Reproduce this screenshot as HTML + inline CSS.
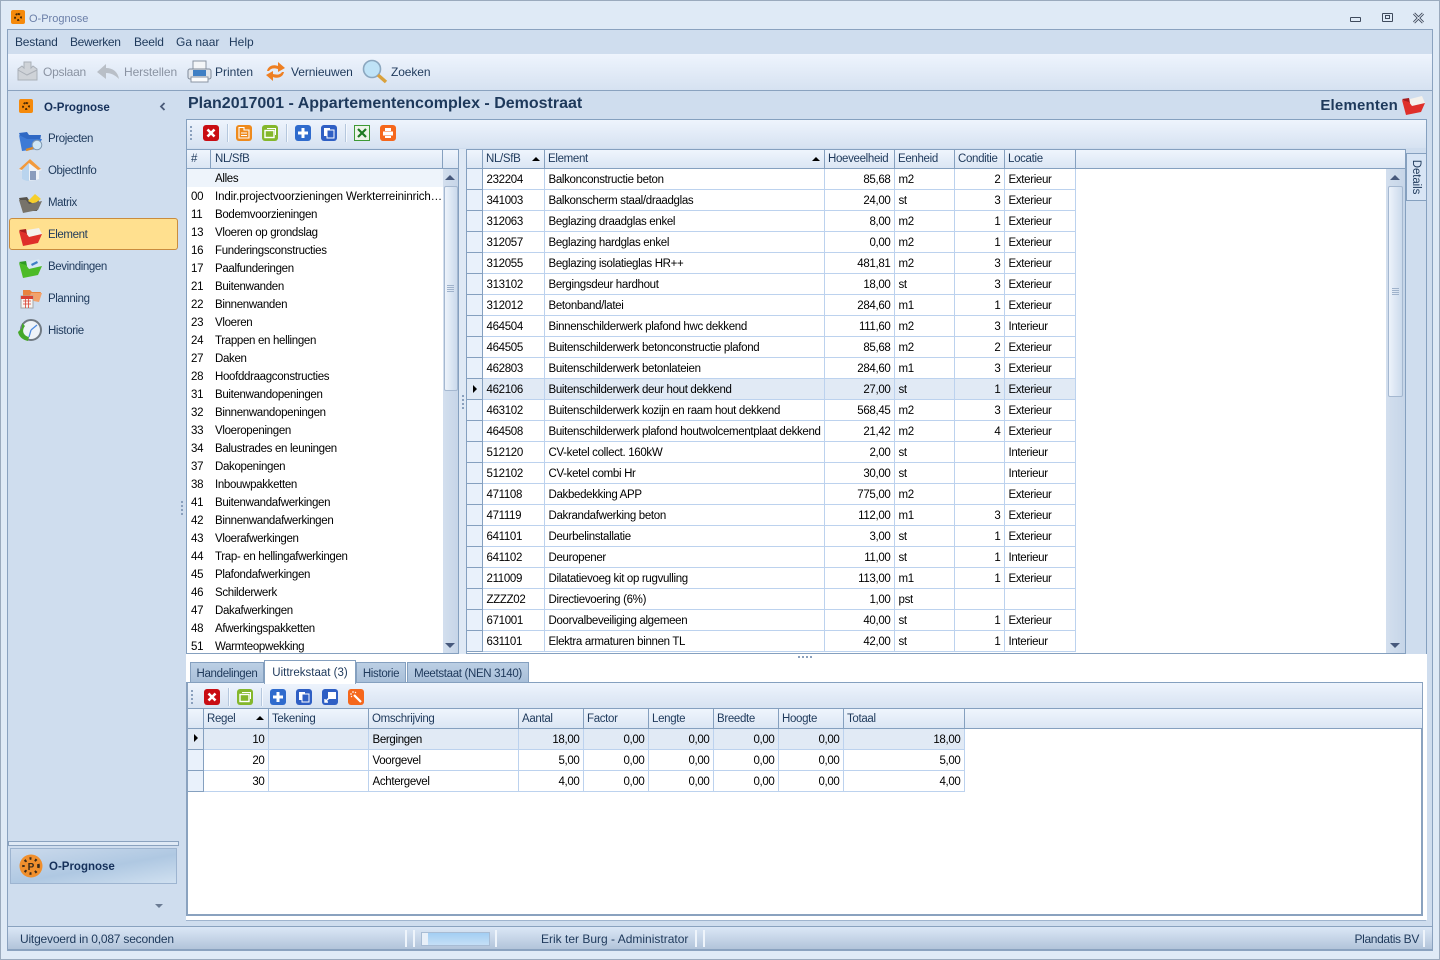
<!DOCTYPE html>
<html><head><meta charset="utf-8"><title>O-Prognose</title>
<style>
html,body{margin:0;padding:0;width:1440px;height:960px;overflow:hidden;background:#dfeaf6}
*{box-sizing:border-box}
body{font-family:"Liberation Sans",sans-serif;font-size:11.5px;letter-spacing:-.33px;color:#000;position:relative}
.a{position:absolute}
.t{position:absolute;white-space:nowrap;line-height:14px}
.nav{color:#1e395b;font-size:11.5px;letter-spacing:-.4px;margin-top:1px}
.m{color:#1e395b;font-size:12px;letter-spacing:-.2px}
.bt{color:#1e395b;font-size:12px;letter-spacing:-.1px}
.blue{color:#1e395b}
table{border-collapse:collapse;table-layout:fixed;position:absolute;font-size:11.5px}
td{padding:3px 3px 0 4px;white-space:nowrap;overflow:hidden;border-right:1px solid #bcd2ee;border-bottom:1px solid #bcd2ee;vertical-align:top}
.g tr{height:21px}
.g td{height:21px;line-height:16px}
.g tr:first-child td{padding-top:4px}
.g td.i,.g tr:first-child td.i{background:#e9f1fb;border-right:1px solid #85a0bf;border-bottom:1px solid #85a0bf;padding:0;vertical-align:middle}
.g td.n{text-align:right;padding-right:3px}
.g tr.s td{background:#e1eaf5}
.g tr.s td.i{background:#e1eaf5}
.tri{display:block;width:0;height:0;border-left:4px solid #000;border-top:4px solid transparent;border-bottom:4px solid transparent;margin-left:6px}
.h{position:absolute;height:20px;background:linear-gradient(#eff5fd,#dbe6f4);border-bottom:1px solid #85a0bf;border-top:1px solid #85a0bf;}
.hc{position:absolute;top:0;height:18px;border-right:1px solid #85a0bf;line-height:19px;padding-left:3px;color:#1e395b;white-space:nowrap}
.lh .hc{height:19px;line-height:21px}
.sort{position:absolute;top:7px;width:0;height:0;border-left:4px solid transparent;border-right:4px solid transparent;border-bottom:4px solid #000}
.lr{position:absolute;left:0;height:18px;line-height:20px;white-space:nowrap}
.lr b{font-weight:normal;position:absolute;left:4px}
.lr span{position:absolute;left:28px}
.tb{position:absolute;background:linear-gradient(#eef4fd,#d6e2f1)}
.ic{position:absolute;width:16px;height:16px;border-radius:3px}
.sep{position:absolute;width:1px;height:18px;background:#b5c7dd;border-right:1px solid #f5f9fe;width:2px}
.grip{position:absolute;width:2px;height:14px;background:repeating-linear-gradient(#8aa0bd 0 2px,transparent 2px 4px)}
.sb{position:absolute;background:linear-gradient(90deg,#d3dfee,#c6d5e8)}
.thumb{position:absolute;background:linear-gradient(90deg,#edf3fb,#cbdaec);border:1px solid #a5b8d0;border-radius:2px}
.up{position:absolute;width:0;height:0;border-left:5px solid transparent;border-right:5px solid transparent;border-bottom:5px solid #47597c}
.dn{position:absolute;width:0;height:0;border-left:5px solid transparent;border-right:5px solid transparent;border-top:5px solid #47597c}
.tab{position:absolute;top:662px;height:20px;background:linear-gradient(#bccfe4,#a8bfd9);border:1px solid #85a0bf;border-bottom:none;color:#1e395b;line-height:22px;text-align:center;white-space:nowrap}
svg{position:absolute;overflow:visible}
</style></head><body>

<!-- window -->
<div class="a" style="left:0;top:0;width:1440px;height:960px;border:1px solid #9aaabd;background:#dfeaf6"></div>
<div class="a" style="left:11px;top:10px;width:14px;height:14px;border-radius:2px;background:#f58a0c"></div>
<div class="a" style="left:14px;top:13px;width:8px;height:8px;border-radius:50%;border:2px dotted #4a2a05"></div>
<div class="t" style="left:29px;top:12px;color:#6b7fa8;font-size:11px;letter-spacing:0">O-Prognose</div>
<div class="a" style="left:1350px;top:17px;width:11px;height:5px;border:1px solid #3f4a5c;border-radius:1px"></div>
<div class="a" style="left:1382px;top:13px;width:11px;height:9px;border:1px solid #3f4a5c;border-radius:1px"></div>
<div class="a" style="left:1385px;top:15px;width:5px;height:4px;border:1px solid #3f4a5c"></div>
<svg style="left:1413px;top:13px" width="11" height="10"><path d="M1 0.5L10 9.5M10 0.5L1 9.5" stroke="#3f4a5c" stroke-width="2.8"/><path d="M1 0.5L10 9.5M10 0.5L1 9.5" stroke="#e6eef8" stroke-width="1"/></svg>

<!-- frame -->
<div class="a" style="left:7px;top:29px;width:1426px;height:922px;border:1px solid #8aa2bf;background:#cfddee"></div>
<div class="t m" style="left:15px;top:35px">Bestand</div>
<div class="t m" style="left:70px;top:35px;letter-spacing:-.35px">Bewerken</div>
<div class="t m" style="left:134px;top:35px">Beeld</div>
<div class="t m" style="left:176px;top:35px;letter-spacing:0">Ga naar</div>
<div class="t m" style="left:229px;top:35px;letter-spacing:0">Help</div>

<!-- main toolbar -->
<div class="tb" style="left:8px;top:54px;width:1424px;height:37px;border-bottom:1px solid #8aa2bf"></div>
<svg style="left:16px;top:60px" width="22" height="22"><path d="M2 9L6 6L8 8V2H15V8L17 6L21 9V20H2Z" fill="#cfd3d8" stroke="#aab0b8"/><path d="M2 10L11 15L21 10" fill="none" stroke="#aab0b8"/></svg>
<div class="t bt" style="left:43px;top:65px;color:#8a93a2;letter-spacing:-.25px">Opslaan</div>
<svg style="left:97px;top:62px" width="23" height="18"><path d="M0 10L9 2V6C16 6 21 10 22 17C18 13 14 11 9 11V17Z" fill="#b9bfc7"/></svg>
<div class="t bt" style="left:124px;top:65px;color:#8a93a2">Herstellen</div>
<svg style="left:187px;top:60px" width="25" height="24"><rect x="6" y="1" width="13" height="9" fill="#f4f6f8" stroke="#8b95a3"/><rect x="1" y="9" width="23" height="10" rx="2" fill="#dfe4ea" stroke="#7f8a99"/><rect x="6" y="10" width="13" height="6" fill="#3f7fc4"/><rect x="4" y="17" width="17" height="5" fill="#fbfcfd" stroke="#8b95a3"/></svg>
<div class="t bt" style="left:215px;top:65px;letter-spacing:0">Printen</div>
<svg style="left:265px;top:60px" width="21" height="23"><path d="M2 11C3 6 8 4 13 6V2L20 8L13 12V9C9 8 6 8 4 11Z" fill="#ee7f22"/><path d="M19 12C18 17 13 19 8 17V21L1 15L8 11V14C12 15 15 15 17 12Z" fill="#ee7f22"/></svg>
<div class="t bt" style="left:291px;top:65px">Vernieuwen</div>
<svg style="left:362px;top:59px" width="26" height="25"><circle cx="10" cy="10" r="8.5" fill="#bfe3f7" stroke="#8ba7bf" stroke-width="1.6"/><path d="M16 16L24 23" stroke="#d9a13c" stroke-width="3.4"/></svg>
<div class="t bt" style="left:391px;top:65px">Zoeken</div>

<!-- left nav -->
<div class="a" style="left:178px;top:91px;width:8px;height:830px;background:#cfddee"></div>
<div class="a" style="left:19px;top:99px;width:14px;height:14px;border-radius:2px;background:#f58a0c"></div>
<div class="a" style="left:22px;top:102px;width:8px;height:8px;border-radius:50%;border:2px dotted #4a2a05"></div>
<div class="t" style="left:44px;top:101px;font-weight:bold;color:#15305a;font-size:11.5px;letter-spacing:0">O-Prognose</div>
<svg style="left:159px;top:102px" width="7" height="9"><path d="M5.5 1L2 4.5L5.5 8" fill="none" stroke="#4a5a78" stroke-width="1.8"/></svg>

<svg style="left:19px;top:132px" width="24" height="19"><path d="M0 1L8 0L10 3L22 3L21 9H3Z" fill="#2f68c4"/><path d="M0 3L3 19L18 17L23 7H8Z" fill="#3d7ad6"/><circle cx="18" cy="13" r="4.8" fill="#cfe6f5" stroke="#8098b0"/><path d="M14 16L7 18" stroke="#d98a2c" stroke-width="2.4"/></svg>
<div class="t nav" style="left:48px;top:131px">Projecten</div>
<svg style="left:19px;top:158px" width="23" height="23"><path d="M11 1L23 12L20 13V21C15 23 7 23 3 21V13L0 12Z" fill="#eef2f7"/><path d="M11 1L22 11L19 12L10 5L3 12L0 11Z" fill="#f29a3d"/><path d="M3 12L10 5V23C7 23 5 22 3 21Z" fill="#b9d4ee"/><rect x="11" y="13" width="6" height="9" fill="#8a9cbc"/></svg>
<div class="t nav" style="left:48px;top:163px">ObjectInfo</div>
<svg style="left:19px;top:194px" width="23" height="19"><path d="M0 4L8 3L10 6H20L18 17H4Z" fill="#55524c"/><path d="M9 7L16 0L22 5L15 10Z" fill="#f6cf2c"/><path d="M0 6L4 19L19 16L23 7L10 10L7 6Z" fill="#77736a"/></svg>
<div class="t nav" style="left:48px;top:195px">Matrix</div>

<div class="a" style="left:9px;top:218px;width:169px;height:32px;border:1px solid #c98c3e;border-radius:3px;background:#ffe08f"></div>
<svg style="left:19px;top:227px" width="23" height="19"><path d="M7 7L10 10L23 7L20 1L8 3Z" fill="#f4f1ec"/><path d="M0 3L7 2L8 7H4Z" fill="#a81c1c"/><path d="M0 4L4 19L19 16L23 7L10 10L7 6Z" fill="#df2f2a"/></svg>
<div class="t nav" style="left:48px;top:227px">Element</div>

<svg style="left:19px;top:259px" width="23" height="19"><path d="M7 7L10 10L23 7L20 0L8 3Z" fill="#d8e7f3"/><path d="M12 5L18 2L19 4L13 7Z" fill="#3f7fc4"/><path d="M0 3L7 2L8 7H4Z" fill="#2f9a23"/><path d="M0 4L4 19L19 16L23 7L10 10L7 6Z" fill="#4dbb27"/></svg>
<div class="t nav" style="left:48px;top:259px">Bevindingen</div>
<svg style="left:20px;top:289px" width="22" height="20"><path d="M3 1H10L12 3H21L18 11H3Z" fill="#e8833f"/><path d="M8 11L11 4H22L19 13Z" fill="#f3a26b"/><rect x="1" y="7" width="12" height="12" fill="#f7f5f2" stroke="#a5a5a5"/><rect x="1" y="7" width="12" height="3" fill="#d94032"/><path d="M3 12H11M3 15H11M5.5 10V19M8.5 10V19" stroke="#d94032" stroke-width=".8"/></svg>
<div class="t nav" style="left:48px;top:291px">Planning</div>
<svg style="left:18px;top:319px" width="24" height="23"><circle cx="13" cy="11" r="10" fill="#eef3f8" stroke="#717a83" stroke-width="2"/><path d="M13 11L19 6M13 11L11 18" stroke="#4f8ce0" stroke-width="1.3"/><path d="M0 13L4 9V4L7 7C3 12 6 17 11 18L10 22C5 21 1 18 0 13Z" fill="#45a82a"/></svg>
<div class="t nav" style="left:48px;top:323px">Historie</div>

<!-- nav bottom -->
<div class="a" style="left:8px;top:841px;width:171px;height:5px;border:1px solid #8aa2bf;background:#dfe9f5"></div>
<div class="a" style="left:10px;top:848px;width:167px;height:36px;border:1px solid #9db4d0;background:linear-gradient(170deg,#cbdaec 0%,#afc8e2 55%,#d0e0f0 100%)"></div>
<svg style="left:19px;top:854px" width="25" height="25"><circle cx="12" cy="12" r="11.5" fill="#f08f2d"/><circle cx="12" cy="12" r="7.5" fill="none" stroke="#3a2a1a" stroke-width="2.6" stroke-dasharray="2 3.6"/><text x="12" y="16" font-size="10" font-weight="bold" text-anchor="middle" fill="#3a2a1a" font-family="Liberation Sans" letter-spacing="0">P</text></svg>
<div class="t" style="left:49px;top:860px;font-weight:bold;color:#15305a;font-size:11.5px;letter-spacing:0">O-Prognose</div>
<div class="a" style="left:155px;top:904px;width:0;height:0;border-left:4px solid transparent;border-right:4px solid transparent;border-top:4px solid #6b7b93"></div>

<!-- title -->
<div class="t" style="left:188px;top:95px;font-weight:bold;color:#1e395b;font-size:16px;letter-spacing:0;line-height:18px">Plan2017001 - Appartementencomplex - Demostraat</div>
<div class="t" style="right:42px;top:97px;font-weight:bold;color:#1e395b;font-size:15px;letter-spacing:.2px;line-height:18px">Elementen</div>
<svg style="left:1402px;top:96px" width="23" height="19"><path d="M7 7L10 10L23 7L20 0L8 3Z" fill="#f4f1ec"/><path d="M0 3L7 2L8 7H4Z" fill="#a81c1c"/><path d="M0 4L4 19L19 16L23 7L10 10L7 6Z" fill="#df2f2a"/></svg>

<!-- upper panel -->
<div class="a" style="left:186px;top:119px;width:1241px;height:535px;background:#cfddee;border:1px solid #85a0bf;border-bottom:none"></div>
<div class="tb" style="left:187px;top:120px;width:1239px;height:28px"></div>
<div class="grip" style="left:190px;top:126px"></div>
<div class="ic" style="left:203px;top:125px;background:#c90d13"></div><svg style="left:206px;top:128px" width="10" height="10"><path d="M1.5 1.5L8.5 8.5M8.5 1.5L1.5 8.5" stroke="#fff" stroke-width="2.6"/></svg>
<div class="sep" style="left:227px;top:124px"></div>
<div class="ic" style="left:236px;top:125px;background:#ee8a1d"></div><svg style="left:238px;top:127px" width="12" height="12"><path d="M1 .5H6V3H11V11H1Z" fill="none" stroke="#fff" stroke-width="1.1"/><path d="M3 6H9M3 8.5H9" stroke="#fff"/></svg>
<div class="ic" style="left:262px;top:125px;background:#84b72c"></div><svg style="left:264px;top:127px" width="12" height="12"><rect x="1" y="3.5" width="9" height="7" fill="none" stroke="#fff" stroke-width="1.4"/><path d="M3 1.5H11.5V8" fill="none" stroke="#fff"/></svg>
<div class="sep" style="left:286px;top:124px"></div>
<div class="ic" style="left:295px;top:125px;background:#2f6bcd"></div><svg style="left:297px;top:127px" width="12" height="12"><path d="M6 1V11M1 6H11" stroke="#fff" stroke-width="3"/></svg>
<div class="ic" style="left:321px;top:125px;background:#2f5fc4"></div><svg style="left:323px;top:127px" width="12" height="12"><rect x="1" y="1" width="6" height="8" fill="#fff"/><rect x="4" y="3" width="7" height="8" fill="#2f5fc4" stroke="#fff"/></svg>
<div class="sep" style="left:345px;top:124px"></div>
<div class="ic" style="left:354px;top:125px;background:#eef4ea;border:1px solid #3e9a35;border-radius:0"></div><svg style="left:357px;top:128px" width="10" height="10"><path d="M1 1L9 9M9 1L1 9" stroke="#1e7a22" stroke-width="2.2"/></svg>
<div class="ic" style="left:380px;top:125px;background:#f5671c"></div><svg style="left:382px;top:127px" width="12" height="12"><rect x="3" y="1" width="6" height="3" fill="#fff"/><rect x="1" y="4.5" width="10" height="4" fill="#fff"/><rect x="3" y="9" width="6" height="2" fill="#fff"/></svg>

<!-- left grid -->
<div class="a" style="left:187px;top:149px;width:272px;height:505px;background:#fff;border-right:1px solid #85a0bf;border-bottom:1px solid #85a0bf;overflow:hidden">
 <div class="h" style="left:0;top:0;width:271px">
  <div class="hc" style="left:0;width:24px;padding-left:4px">#</div>
  <div class="hc" style="left:24px;width:232px;padding-left:4px">NL/SfB</div>
  <div class="hc" style="left:256px;width:15px;border-right:none"></div>
 </div>
 <div class="a" style="left:0;top:20px;width:256px;height:18px;background:#eef4fb"></div>
 <div class="lr" style="top:20px;width:256px"><span>Alles</span></div>
 <div class="lr" style="top:38px;width:256px"><b>00</b><span style="letter-spacing:-.12px">Indir.projectvoorzieningen Werkterreininrich…</span></div>
 <div class="lr" style="top:56px"><b>11</b><span>Bodemvoorzieningen</span></div>
 <div class="lr" style="top:74px"><b>13</b><span>Vloeren op grondslag</span></div>
 <div class="lr" style="top:92px"><b>16</b><span>Funderingsconstructies</span></div>
 <div class="lr" style="top:110px"><b>17</b><span>Paalfunderingen</span></div>
 <div class="lr" style="top:128px"><b>21</b><span>Buitenwanden</span></div>
 <div class="lr" style="top:146px"><b>22</b><span>Binnenwanden</span></div>
 <div class="lr" style="top:164px"><b>23</b><span>Vloeren</span></div>
 <div class="lr" style="top:182px"><b>24</b><span>Trappen en hellingen</span></div>
 <div class="lr" style="top:200px"><b>27</b><span>Daken</span></div>
 <div class="lr" style="top:218px"><b>28</b><span>Hoofddraagconstructies</span></div>
 <div class="lr" style="top:236px"><b>31</b><span>Buitenwandopeningen</span></div>
 <div class="lr" style="top:254px"><b>32</b><span>Binnenwandopeningen</span></div>
 <div class="lr" style="top:272px"><b>33</b><span>Vloeropeningen</span></div>
 <div class="lr" style="top:290px"><b>34</b><span>Balustrades en leuningen</span></div>
 <div class="lr" style="top:308px"><b>37</b><span>Dakopeningen</span></div>
 <div class="lr" style="top:326px"><b>38</b><span>Inbouwpakketten</span></div>
 <div class="lr" style="top:344px"><b>41</b><span>Buitenwandafwerkingen</span></div>
 <div class="lr" style="top:362px"><b>42</b><span>Binnenwandafwerkingen</span></div>
 <div class="lr" style="top:380px"><b>43</b><span>Vloerafwerkingen</span></div>
 <div class="lr" style="top:398px"><b>44</b><span>Trap- en hellingafwerkingen</span></div>
 <div class="lr" style="top:416px"><b>45</b><span>Plafondafwerkingen</span></div>
 <div class="lr" style="top:434px"><b>46</b><span>Schilderwerk</span></div>
 <div class="lr" style="top:452px"><b>47</b><span>Dakafwerkingen</span></div>
 <div class="lr" style="top:470px"><b>48</b><span>Afwerkingspakketten</span></div>
 <div class="lr" style="top:488px"><b>51</b><span>Warmteopwekking</span></div>
 <div class="sb" style="left:256px;top:20px;width:15px;height:484px"></div>
 <div class="up" style="left:258px;top:26px"></div>
 <div class="thumb" style="left:257px;top:37px;width:14px;height:205px"></div>
 <div class="a" style="left:260px;top:136px;width:7px;height:7px;background:repeating-linear-gradient(#9fb2cb 0 1px,transparent 1px 2px)"></div>
 <div class="dn" style="left:258px;top:494px"></div>
</div>

<!-- splitters -->
<div class="a" style="left:459px;top:149px;width:7px;height:505px;background:#dfe9f5"></div>
<div class="grip" style="left:462px;top:395px"></div>
<div class="grip" style="left:181px;top:501px"></div>

<!-- right grid -->
<div class="a" style="left:466px;top:149px;width:940px;height:505px;background:#fff;border-left:1px solid #85a0bf;border-right:1px solid #85a0bf;border-bottom:1px solid #85a0bf;overflow:hidden">
 <table class="g" style="left:0;top:19px;width:608px">
  <colgroup><col style="width:15px"><col style="width:62px"><col style="width:280px"><col style="width:70px"><col style="width:60px"><col style="width:50px"><col style="width:71px"></colgroup>
  <tr><td class="i"></td><td>232204</td><td>Balkonconstructie beton</td><td class="n">85,68</td><td>m2</td><td class="n">2</td><td>Exterieur</td></tr>
  <tr><td class="i"></td><td>341003</td><td>Balkonscherm staal/draadglas</td><td class="n">24,00</td><td>st</td><td class="n">3</td><td>Exterieur</td></tr>
  <tr><td class="i"></td><td>312063</td><td>Beglazing draadglas enkel</td><td class="n">8,00</td><td>m2</td><td class="n">1</td><td>Exterieur</td></tr>
  <tr><td class="i"></td><td>312057</td><td>Beglazing hardglas enkel</td><td class="n">0,00</td><td>m2</td><td class="n">1</td><td>Exterieur</td></tr>
  <tr><td class="i"></td><td>312055</td><td>Beglazing isolatieglas HR++</td><td class="n">481,81</td><td>m2</td><td class="n">3</td><td>Exterieur</td></tr>
  <tr><td class="i"></td><td>313102</td><td>Bergingsdeur hardhout</td><td class="n">18,00</td><td>st</td><td class="n">3</td><td>Exterieur</td></tr>
  <tr><td class="i"></td><td>312012</td><td>Betonband/latei</td><td class="n">284,60</td><td>m1</td><td class="n">1</td><td>Exterieur</td></tr>
  <tr><td class="i"></td><td>464504</td><td>Binnenschilderwerk plafond hwc dekkend</td><td class="n">111,60</td><td>m2</td><td class="n">3</td><td>Interieur</td></tr>
  <tr><td class="i"></td><td>464505</td><td>Buitenschilderwerk betonconstructie plafond</td><td class="n">85,68</td><td>m2</td><td class="n">2</td><td>Exterieur</td></tr>
  <tr><td class="i"></td><td>462803</td><td>Buitenschilderwerk betonlateien</td><td class="n">284,60</td><td>m1</td><td class="n">3</td><td>Exterieur</td></tr>
  <tr class="s"><td class="i"><i class="tri"></i></td><td>462106</td><td>Buitenschilderwerk deur hout dekkend</td><td class="n">27,00</td><td>st</td><td class="n">1</td><td>Exterieur</td></tr>
  <tr><td class="i"></td><td>463102</td><td>Buitenschilderwerk kozijn en raam hout dekkend</td><td class="n">568,45</td><td>m2</td><td class="n">3</td><td>Exterieur</td></tr>
  <tr><td class="i"></td><td>464508</td><td>Buitenschilderwerk plafond houtwolcementplaat dekkend</td><td class="n">21,42</td><td>m2</td><td class="n">4</td><td>Exterieur</td></tr>
  <tr><td class="i"></td><td>512120</td><td>CV-ketel collect. 160kW</td><td class="n">2,00</td><td>st</td><td class="n"></td><td>Interieur</td></tr>
  <tr><td class="i"></td><td>512102</td><td>CV-ketel combi Hr</td><td class="n">30,00</td><td>st</td><td class="n"></td><td>Interieur</td></tr>
  <tr><td class="i"></td><td>471108</td><td>Dakbedekking APP</td><td class="n">775,00</td><td>m2</td><td class="n"></td><td>Exterieur</td></tr>
  <tr><td class="i"></td><td>471119</td><td>Dakrandafwerking beton</td><td class="n">112,00</td><td>m1</td><td class="n">3</td><td>Exterieur</td></tr>
  <tr><td class="i"></td><td>641101</td><td>Deurbelinstallatie</td><td class="n">3,00</td><td>st</td><td class="n">1</td><td>Exterieur</td></tr>
  <tr><td class="i"></td><td>641102</td><td>Deuropener</td><td class="n">11,00</td><td>st</td><td class="n">1</td><td>Interieur</td></tr>
  <tr><td class="i"></td><td>211009</td><td>Dilatatievoeg kit op rugvulling</td><td class="n">113,00</td><td>m1</td><td class="n">1</td><td>Exterieur</td></tr>
  <tr><td class="i"></td><td>ZZZZ02</td><td>Directievoering (6%)</td><td class="n">1,00</td><td>pst</td><td class="n"></td><td></td></tr>
  <tr><td class="i"></td><td>671001</td><td>Doorvalbeveiliging algemeen</td><td class="n">40,00</td><td>st</td><td class="n">1</td><td>Exterieur</td></tr>
  <tr><td class="i"></td><td>631101</td><td>Elektra armaturen binnen TL</td><td class="n">42,00</td><td>st</td><td class="n">1</td><td>Interieur</td></tr>
 </table>
 <div class="h" style="left:0;top:0;width:938px">
  <div class="hc" style="left:0;width:16px"></div>
  <div class="hc" style="left:16px;width:62px">NL/SfB</div><div class="sort" style="left:65px"></div>
  <div class="hc" style="left:78px;width:280px">Element</div><div class="sort" style="left:345px"></div>
  <div class="hc" style="left:358px;width:70px">Hoeveelheid</div>
  <div class="hc" style="left:428px;width:60px">Eenheid</div>
  <div class="hc" style="left:488px;width:50px">Conditie</div>
  <div class="hc" style="left:538px;width:71px">Locatie</div>
 </div>
 <div class="sb" style="left:919px;top:20px;width:19px;height:484px"></div>
 <div class="up" style="left:923px;top:26px"></div>
 <div class="thumb" style="left:921px;top:37px;width:15px;height:211px"></div>
 <div class="a" style="left:925px;top:139px;width:7px;height:7px;background:repeating-linear-gradient(#9fb2cb 0 1px,transparent 1px 2px)"></div>
 <div class="dn" style="left:923px;top:494px"></div>
</div>

<!-- details tab -->
<div class="a" style="left:1406px;top:153px;width:21px;height:48px;background:#d8e5f5;border:1px solid #85a0bf"></div>
<div class="t" style="left:1394px;top:170px;width:44px;text-align:center;transform:rotate(90deg);color:#1e395b;font-size:11.5px;letter-spacing:-.1px">Details</div>

<!-- lower white area -->
<div class="a" style="left:186px;top:654px;width:1241px;height:267px;background:#fff;border-bottom:1px solid #9fb4ce;border-right:1px solid #fff"></div>
<div class="a" style="left:798px;top:656px;width:16px;height:2px;background:repeating-linear-gradient(90deg,#8aa0bd 0 2px,transparent 2px 4px)"></div>

<div class="tab" style="left:190px;width:74px">Handelingen</div>
<div class="tab" style="left:264px;top:660px;width:92px;height:24px;background:#fff;z-index:3;line-height:24px;letter-spacing:0">Uittrekstaat (3)</div>
<div class="tab" style="left:356px;width:50px">Historie</div>
<div class="tab" style="left:407px;width:122px">Meetstaat (NEN 3140)</div>

<div class="a" style="left:186px;top:682px;width:1237px;height:234px;background:#fff;border:2px solid #8aa2bf;border-top:1px solid #85a0bf;border-left-width:2px"></div>
<div class="tb" style="left:188px;top:683px;width:1234px;height:26px"></div>
<div class="grip" style="left:191px;top:690px"></div>
<div class="ic" style="left:204px;top:689px;background:#c90d13"></div><svg style="left:207px;top:692px" width="10" height="10"><path d="M1.5 1.5L8.5 8.5M8.5 1.5L1.5 8.5" stroke="#fff" stroke-width="2.6"/></svg>
<div class="sep" style="left:228px;top:688px"></div>
<div class="ic" style="left:237px;top:689px;background:#84b72c"></div><svg style="left:239px;top:691px" width="12" height="12"><rect x="1" y="3.5" width="9" height="7" fill="none" stroke="#fff" stroke-width="1.4"/><path d="M3 1.5H11.5V8" fill="none" stroke="#fff"/></svg>
<div class="sep" style="left:261px;top:688px"></div>
<div class="ic" style="left:270px;top:689px;background:#2f6bcd"></div><svg style="left:272px;top:691px" width="12" height="12"><path d="M6 1V11M1 6H11" stroke="#fff" stroke-width="3"/></svg>
<div class="ic" style="left:296px;top:689px;background:#2f5fc4"></div><svg style="left:298px;top:691px" width="12" height="12"><rect x="1" y="1" width="6" height="8" fill="#fff"/><rect x="4" y="3" width="7" height="8" fill="#2f5fc4" stroke="#fff"/></svg>
<div class="ic" style="left:322px;top:689px;background:#2f5fc4"></div><svg style="left:324px;top:691px" width="12" height="12"><rect x="4" y="1" width="8" height="7" fill="#fff"/><path d="M1 11L5 7M1 8V11H4" stroke="#fff" fill="none" stroke-width="1.4"/></svg>
<div class="ic" style="left:348px;top:689px;background:#f5671c"></div><svg style="left:350px;top:691px" width="12" height="12"><path d="M4 4L11 11" stroke="#fff" stroke-width="2.2"/><path d="M3 0V2M0 3H2M6 1L5 2M1 6L2 5" stroke="#fff"/></svg>

<table class="g" style="left:188px;top:728px;width:776px">
 <colgroup><col style="width:15px"><col style="width:65px"><col style="width:100px"><col style="width:150px"><col style="width:65px"><col style="width:65px"><col style="width:65px"><col style="width:65px"><col style="width:65px"><col style="width:121px"></colgroup>
 <tr class="s"><td class="i"><i class="tri" style="margin-left:6px"></i></td><td class="n">10</td><td></td><td>Bergingen</td><td class="n">18,00</td><td class="n">0,00</td><td class="n">0,00</td><td class="n">0,00</td><td class="n">0,00</td><td class="n">18,00</td></tr>
 <tr><td class="i"></td><td class="n">20</td><td></td><td>Voorgevel</td><td class="n">5,00</td><td class="n">0,00</td><td class="n">0,00</td><td class="n">0,00</td><td class="n">0,00</td><td class="n">5,00</td></tr>
 <tr><td class="i"></td><td class="n">30</td><td></td><td>Achtergevel</td><td class="n">4,00</td><td class="n">0,00</td><td class="n">0,00</td><td class="n">0,00</td><td class="n">0,00</td><td class="n">4,00</td></tr>
</table>
<div class="h lh" style="left:188px;top:708px;width:1234px;height:21px">
 <div class="hc" style="left:0;width:16px"></div>
 <div class="hc" style="left:16px;width:65px">Regel</div><div class="sort" style="left:68px;top:7px"></div>
 <div class="hc" style="left:81px;width:100px">Tekening</div>
 <div class="hc" style="left:181px;width:150px">Omschrijving</div>
 <div class="hc" style="left:331px;width:65px">Aantal</div>
 <div class="hc" style="left:396px;width:65px">Factor</div>
 <div class="hc" style="left:461px;width:65px">Lengte</div>
 <div class="hc" style="left:526px;width:65px">Breedte</div>
 <div class="hc" style="left:591px;width:65px">Hoogte</div>
 <div class="hc" style="left:656px;width:121px">Totaal</div>
</div>

<!-- status bar -->
<div class="a" style="left:8px;top:926px;width:1424px;height:24px;background:linear-gradient(#dbe7f6,#b2c4da);border-top:1px solid #8aa2bf;border-bottom:1px solid #8aa2bf"></div>
<div class="t" style="left:20px;top:932px;color:#1e395b;font-size:12px;letter-spacing:-.2px">Uitgevoerd in 0,087 seconden</div>
<div class="a" style="left:405px;top:930px;width:2px;height:17px;background:#eef4fb"></div>
<div class="a" style="left:413px;top:930px;width:2px;height:17px;background:#eef4fb"></div>
<div class="a" style="left:421px;top:932px;width:69px;height:14px;border:1px solid #a8bcd4;background:linear-gradient(#a3cef3,#c5dff6)"></div>
<div class="a" style="left:422px;top:933px;width:6px;height:12px;background:#e8f0f9"></div>
<div class="a" style="left:495px;top:930px;width:2px;height:17px;background:#eef4fb"></div>
<div class="t" style="left:541px;top:932px;color:#1e395b;font-size:12px;letter-spacing:0">Erik ter Burg - Administrator</div>
<div class="a" style="left:695px;top:930px;width:2px;height:17px;background:#eef4fb"></div>
<div class="a" style="left:703px;top:930px;width:2px;height:17px;background:#eef4fb"></div>
<div class="t" style="right:21px;top:932px;color:#1e395b;font-size:12px;letter-spacing:-.35px">Plandatis BV</div>
<div class="a" style="left:1423px;top:930px;width:2px;height:17px;background:#eef4fb"></div>
</body></html>
